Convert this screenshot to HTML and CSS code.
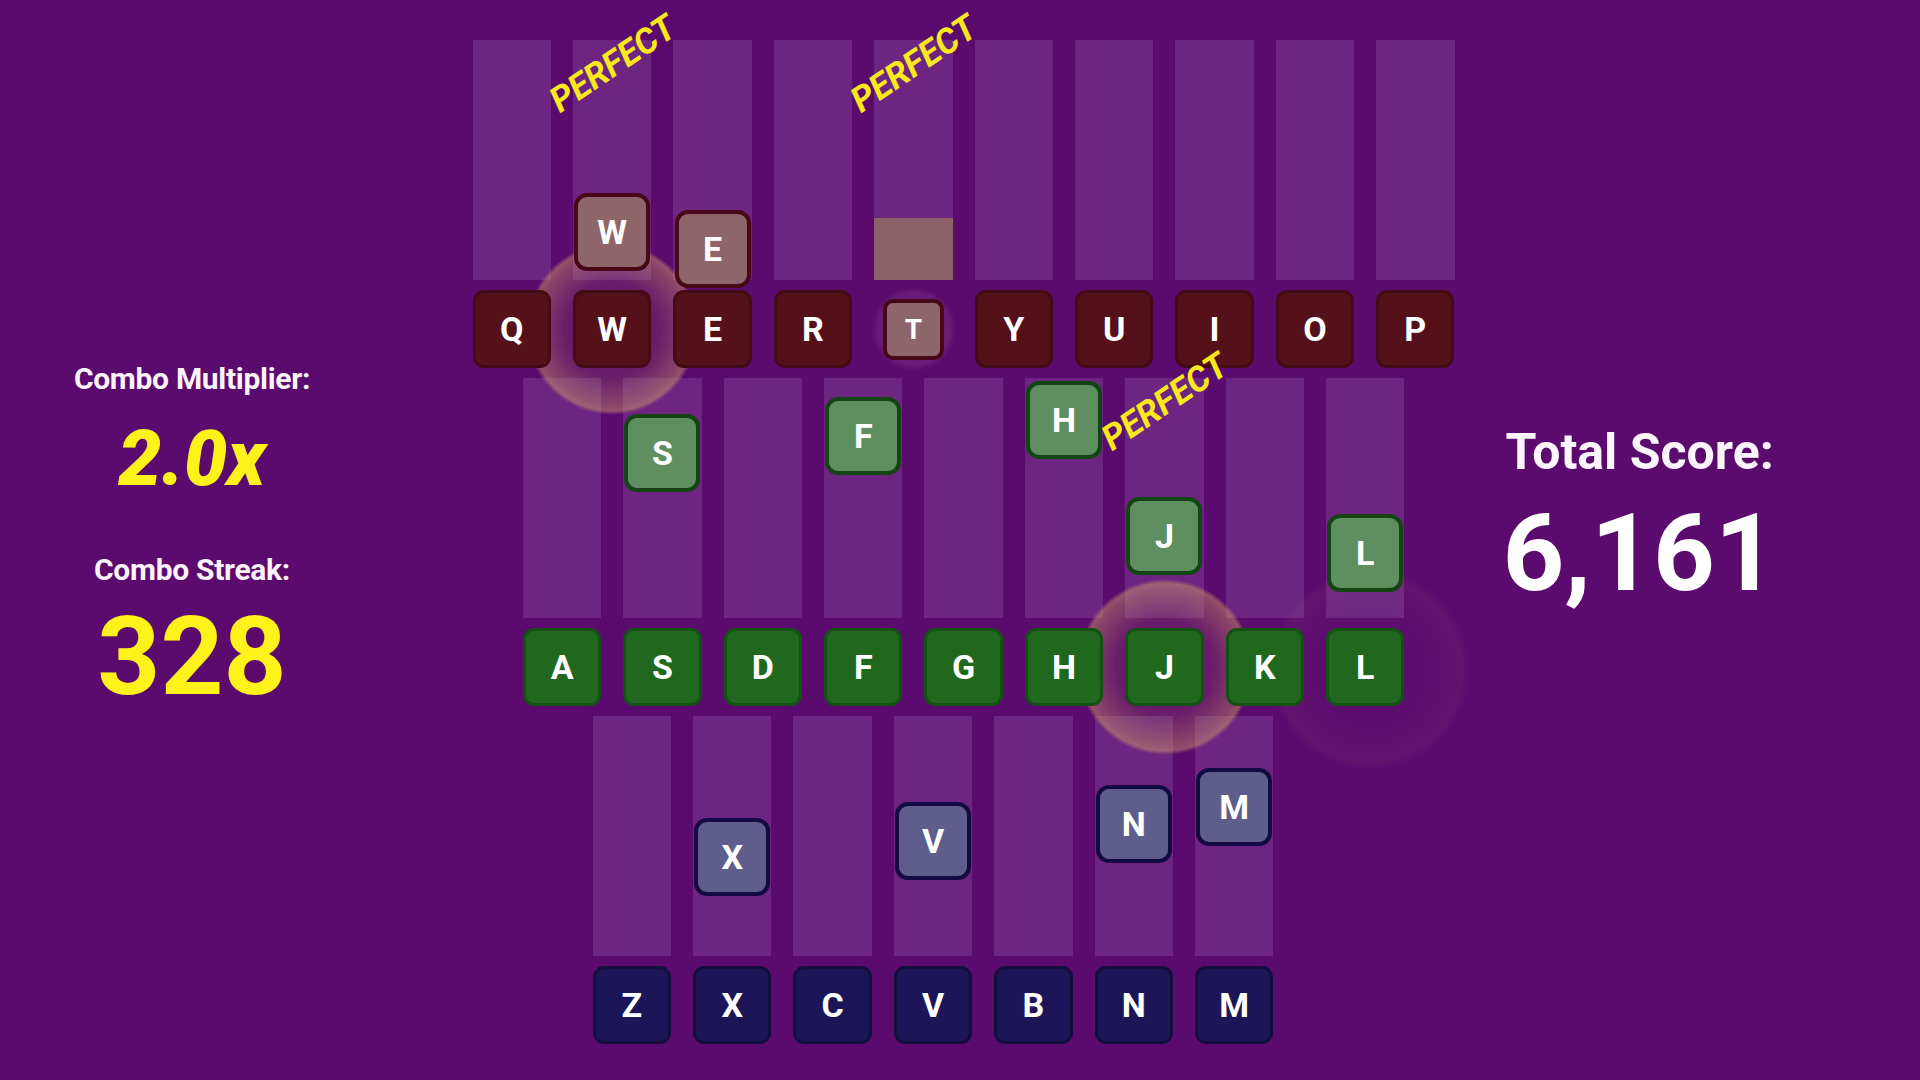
FILE: index.html
```html
<!DOCTYPE html>
<html lang="en">
<head>
<meta charset="utf-8">
<title>Keyboard Rhythm</title>
<link rel="stylesheet" href="styles.css">
</head>
<body>
<div class="page">
  <aside class="stats">
    <div class="stat-label label-mult">Combo Multiplier:</div>
    <div class="mult">2.0x</div>
    <div class="stat-label label-streak">Combo Streak:</div>
    <div class="streak">328</div>
  </aside>

  <main class="board">
    <div class="row row-top">
      <div class="lanes">
        <div class="lane"></div>
        <div class="lane"><div class="tile tile-red" style="top:153px">W</div></div>
        <div class="lane"><div class="tile tile-red" style="top:170px">E</div></div>
        <div class="lane"></div>
        <div class="lane"><div class="hit-fill"></div></div>
        <div class="lane"></div>
        <div class="lane"></div>
        <div class="lane"></div>
        <div class="lane"></div>
        <div class="lane"></div>
      </div>
      <div class="keys">
        <div class="key key-red">Q</div>
        <div class="key key-red">W</div>
        <div class="key key-red">E</div>
        <div class="key key-red">R</div>
        <div class="key key-red pressed">T</div>
        <div class="key key-red">Y</div>
        <div class="key key-red">U</div>
        <div class="key key-red">I</div>
        <div class="key key-red">O</div>
        <div class="key key-red">P</div>
      </div>
    </div>

    <div class="row row-mid">
      <div class="lanes">
        <div class="lane"></div>
        <div class="lane"><div class="tile tile-green" style="top:36px">S</div></div>
        <div class="lane"></div>
        <div class="lane"><div class="tile tile-green" style="top:19px">F</div></div>
        <div class="lane"></div>
        <div class="lane"><div class="tile tile-green" style="top:3px">H</div></div>
        <div class="lane"><div class="tile tile-green" style="top:119px">J</div></div>
        <div class="lane"></div>
        <div class="lane"><div class="tile tile-green" style="top:136px">L</div></div>
      </div>
      <div class="keys">
        <div class="key key-green">A</div>
        <div class="key key-green">S</div>
        <div class="key key-green">D</div>
        <div class="key key-green">F</div>
        <div class="key key-green">G</div>
        <div class="key key-green">H</div>
        <div class="key key-green">J</div>
        <div class="key key-green">K</div>
        <div class="key key-green">L</div>
      </div>
    </div>

    <div class="row row-bot">
      <div class="lanes">
        <div class="lane"></div>
        <div class="lane"><div class="tile tile-blue" style="top:102px">X</div></div>
        <div class="lane"></div>
        <div class="lane"><div class="tile tile-blue" style="top:86px">V</div></div>
        <div class="lane"></div>
        <div class="lane"><div class="tile tile-blue" style="top:69px">N</div></div>
        <div class="lane"><div class="tile tile-blue" style="top:52px">M</div></div>
      </div>
      <div class="keys">
        <div class="key key-blue">Z</div>
        <div class="key key-blue">X</div>
        <div class="key key-blue">C</div>
        <div class="key key-blue">V</div>
        <div class="key key-blue">B</div>
        <div class="key key-blue">N</div>
        <div class="key key-blue">M</div>
      </div>
    </div>

    <div class="glow glow-w"></div>
    <div class="glow glow-j"></div>
    <div class="glow-faint glow-l"></div>
    <div class="glow-t"></div>

    <div class="perfect perfect-1">PERFECT</div>
    <div class="perfect perfect-2">PERFECT</div>
    <div class="perfect perfect-3">PERFECT</div>
  </main>

  <aside class="score">
    <div class="score-label">Total Score:</div>
    <div class="score-value">6,161</div>
  </aside>
</div>
</body>
</html>
```

FILE: styles.css
```css
* { box-sizing: border-box; }

html, body {
  margin: 0;
  padding: 0;
  width: 1920px;
  height: 1080px;
  overflow: hidden;
  background: #5b0b6e;
  font-family: "Roboto", "Liberation Sans", sans-serif;
  color: #ffffff;
}

.page {
  display: flex;
  width: 1920px;
  height: 1080px;
}

/* ---------- left stats ---------- */
.stats {
  width: 384px;
  flex: none;
  display: flex;
  flex-direction: column;
  align-items: center;
  padding-top: 364px;
}

.stat-label {
  font-size: 30px;
  line-height: 30px;
  font-weight: 700;
  color: #fbf3fb;
  letter-spacing: -0.3px;
}

.mult {
  margin-top: 27px;
  font-size: 77px;
  line-height: 77px;
  font-weight: 900;
  font-style: italic;
  color: #fff21a;
}

.label-streak { margin-top: 57px; }

.streak {
  margin-top: 17px;
  font-size: 110px;
  line-height: 110px;
  font-weight: 700;
  color: #fff21a;
}

/* ---------- board ---------- */
.board {
  position: relative;
  width: 982px;
  flex: none;
  margin-left: 88.6px;
  padding-top: 40px;
}

.row-mid { margin-left: 50.3px; }
.row-bot { margin-left: 120.1px; }

.lanes {
  display: flex;
  gap: 22px;
  height: 240px;
  margin-bottom: 10px;
}

.lane {
  position: relative;
  width: 78.4px;
  height: 240px;
  background: #6d2581;
}

.keys {
  display: flex;
  gap: 22px;
  height: 78px;
  margin-bottom: 10px;
  align-items: center;
}

.key {
  position: relative;
  z-index: 2;
  width: 78.4px;
  height: 78px;
  border-radius: 11px;
  display: flex;
  align-items: center;
  justify-content: center;
  font-size: 34px;
  font-weight: 700;
  color: #ffffff;
  border: 3px solid transparent;
}

.key-red { background: #54111a; border-color: #440b16; }
.key-green { background: #1f681e; border-color: #155015; }
.key-blue { background: #1c1658; border-color: #130e40; }

.key.pressed {
  width: 61px;
  height: 61px;
  margin: 0 8.7px;
  background: #8e656a;
  border: 4px solid #470918;
  border-radius: 10px;
  font-size: 28px;
}

.tile {
  position: absolute;
  z-index: 2;
  left: 1.2px;
  width: 76px;
  height: 78px;
  border-radius: 13px;
  border: 4px solid;
  display: flex;
  align-items: center;
  justify-content: center;
  font-size: 34px;
  font-weight: 700;
  color: #ffffff;
}

.tile-red { background: #8e656a; border-color: #470918; }
.tile-green { background: #5f8f60; border-color: #124512; }
.tile-blue { background: #5f5d8c; border-color: #140a42; }

.hit-fill {
  position: absolute;
  left: 0;
  right: 0;
  bottom: 0;
  height: 62px;
  background: #8c6169;
}

/* ---------- glows ---------- */
.glow {
  position: absolute;
  z-index: 1;
  border-radius: 50%;
  background: radial-gradient(circle closest-side,
    rgba(150, 95, 75, 0.08) 0%,
    rgba(185, 130, 85, 0.15) 55%,
    rgba(215, 160, 95, 0.38) 88%,
    rgba(225, 170, 100, 0.44) 95%,
    rgba(225, 170, 100, 0) 100%);
}

.glow-w { left: 53px; top: 243px; width: 172px; height: 172px; }
.glow-j { left: 604px; top: 579px; width: 176px; height: 176px; }

.glow-faint {
  position: absolute;
  z-index: 1;
  border-radius: 50%;
  background: radial-gradient(circle closest-side,
    rgba(200, 140, 120, 0) 0%,
    rgba(200, 140, 120, 0.02) 60%,
    rgba(210, 150, 120, 0.06) 92%,
    rgba(210, 150, 120, 0) 100%);
}

.glow-l { left: 797px; top: 570px; width: 200px; height: 200px; }

.glow-t {
  position: absolute;
  z-index: 1;
  left: 399px;
  top: 287px;
  width: 84px;
  height: 84px;
  border-radius: 50%;
  background: radial-gradient(circle closest-side,
    rgba(160, 90, 160, 0.12) 0%,
    rgba(160, 90, 160, 0.22) 85%,
    rgba(160, 90, 160, 0) 100%);
}

/* ---------- PERFECT labels ---------- */
.perfect {
  position: absolute;
  z-index: 3;
  font-size: 35px;
  line-height: 35px;
  font-weight: 700;
  font-style: italic;
  color: #f9e81c;
  white-space: nowrap;
  transform: translate(-50%, -50%) rotate(-34deg);
}

.perfect-1 { left: 140px; top: 64px; }
.perfect-2 { left: 441px; top: 64px; }
.perfect-3 { left: 692px; top: 402px; }

/* ---------- right score ---------- */
.score {
  width: 370px;
  flex: none;
  display: flex;
  flex-direction: column;
  align-items: center;
  padding-top: 427px;
}

.score-label {
  font-size: 50px;
  line-height: 50px;
  font-weight: 700;
  color: #fcf6fc;
}

.score-value {
  margin-top: 22px;
  font-size: 108px;
  line-height: 108px;
  font-weight: 700;
  color: #ffffff;
}
```
